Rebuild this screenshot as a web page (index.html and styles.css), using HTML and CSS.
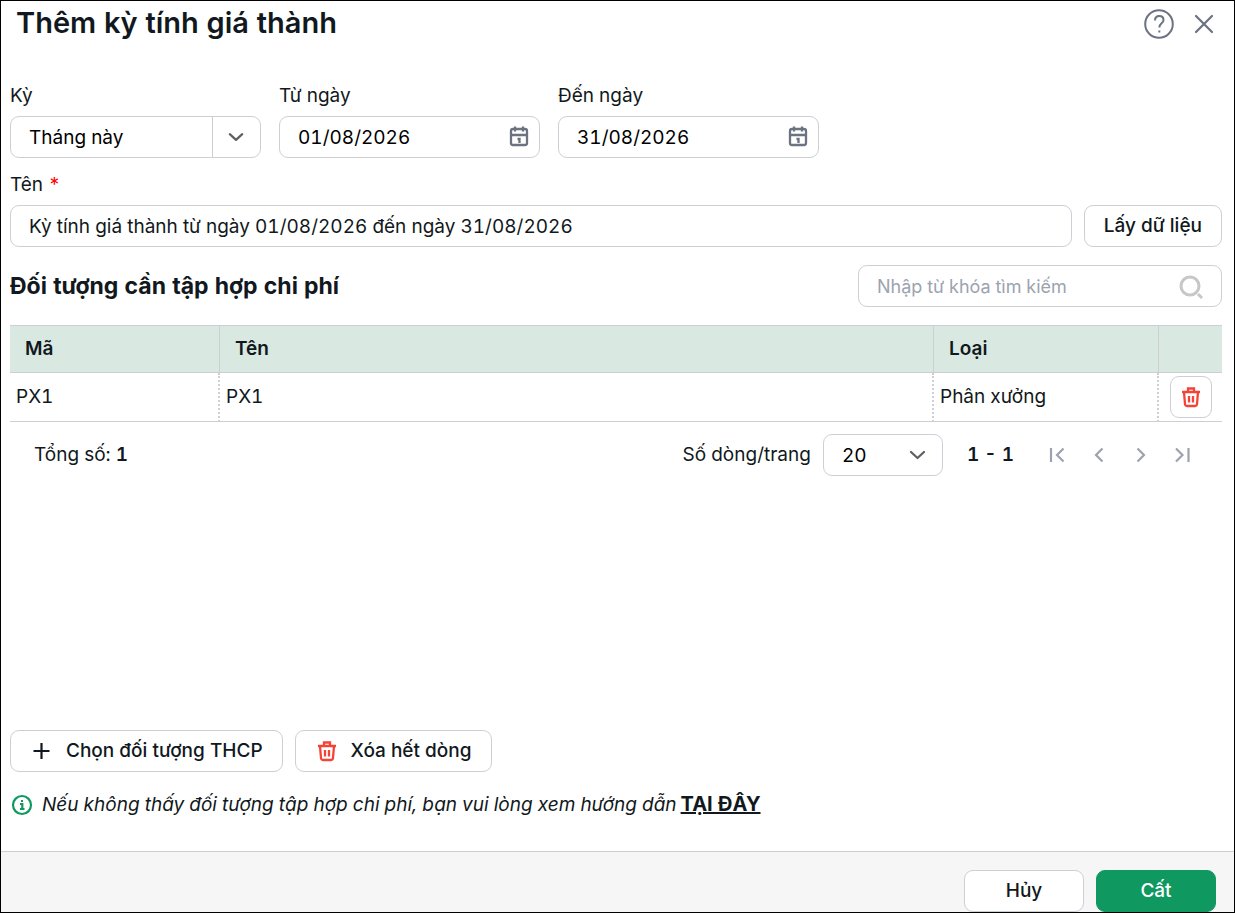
FILE: index.html
```html
<!DOCTYPE html>
<html lang="vi">
<head>
    <meta charset="UTF-8">
    <meta name="viewport" content="width=device-width, initial-scale=1.0">
    <title>Thêm kỳ tính giá thành</title>
    <link rel="stylesheet" href="styles.css">
</head>
<body>
    <!-- Shared icons -->
    <svg class="sprite" aria-hidden="true">
        <symbol id="icon-chevron" viewBox="0 0 24 24">
            <path d="M5 9L11.500 15L18 9" fill="none" stroke="currentColor" stroke-width="2.300" stroke-linecap="round" stroke-linejoin="round"/>
        </symbol>
        <symbol id="icon-calendar" viewBox="0 0 24 24">
            <g fill="none" stroke="currentColor" stroke-width="2.300">
                <rect x="4" y="4" width="16" height="16" rx="2"/>
                <path d="M4 10H20M8 1.500V6.500M16 1.500V6.500M10.500 14H12.500V18"/>
            </g>
        </symbol>
        <symbol id="icon-trash" viewBox="0 0 24 24">
            <g fill="none" stroke="currentColor" stroke-width="2.300">
                <path d="M3 7H21M5 7L6 19Q6.200 21 8 21H16Q17.800 21 18 19L19 7"/>
                <path d="M9 7V3.500H15V7M10 11V17.500M14 11V17.500"/>
            </g>
        </symbol>
    </svg>

    <div class="dialog">
        <header class="dialog-header">
            <h1>Thêm kỳ tính giá thành</h1>
            <div class="header-actions">
                <button class="icon-btn" type="button" aria-label="Trợ giúp">
                    <svg width="30" height="30" viewBox="0 0 30 30" fill="none" stroke="currentColor" stroke-width="2">
                        <circle cx="15" cy="15" r="13.800"/>
                        <path d="M11 11.500C11 8.500 12.800 7 15.300 7C17.800 7 19.500 8.500 19.500 11C19.500 14.500 15.300 14 15.300 18.500"/>
                        <path d="M15.300 21.500V23.500"/>
                    </svg>
                </button>
                <button class="icon-btn" type="button" aria-label="Đóng">
                    <svg width="24" height="24" viewBox="0 0 24 24" fill="none" stroke="currentColor" stroke-width="2.200" stroke-linecap="round">
                        <path d="M4 4L20 20M20 4L4 20"/>
                    </svg>
                </button>
            </div>
        </header>

        <main class="dialog-body">
            <div class="row period-row">
                <div class="field field-period">
                    <label for="period">Kỳ</label>
                    <div class="select-box split">
                        <select id="period">
                            <option>Tháng này</option>
                        </select>
                        <svg class="select-arrow" width="24" height="24"><use href="#icon-chevron"/></svg>
                    </div>
                </div>
                <div class="field">
                    <label for="fromDate">Từ ngày</label>
                    <div class="input-box">
                        <input type="text" id="fromDate" value="01/08/2026">
                        <svg class="calendar" width="24" height="24"><use href="#icon-calendar"/></svg>
                    </div>
                </div>
                <div class="field">
                    <label for="toDate">Đến ngày</label>
                    <div class="input-box">
                        <input type="text" id="toDate" value="31/08/2026">
                        <svg class="calendar" width="24" height="24"><use href="#icon-calendar"/></svg>
                    </div>
                </div>
            </div>

            <div class="row name-row">
                <div class="field field-name">
                    <label for="name">Tên <span class="required">*</span></label>
                    <div class="input-box">
                        <input class="name-input" type="text" id="name" value="Kỳ tính giá thành từ ngày 01/08/2026 đến ngày 31/08/2026">
                    </div>
                </div>
                <button class="btn" type="button">Lấy dữ liệu</button>
            </div>

            <div class="row section-row">
                <h2>Đối tượng cần tập hợp chi phí</h2>
                <div class="input-box search-box">
                    <input type="search" placeholder="Nhập từ khóa tìm kiếm" aria-label="Tìm kiếm">
                    <svg width="26" height="26" viewBox="0 0 26 26" fill="none" stroke="#c7c7c7" stroke-width="3">
                        <circle cx="12" cy="13" r="9"/>
                        <path d="M20 21L24 25"/>
                    </svg>
                </div>
            </div>

            <table>
                <thead>
                    <tr>
                        <th class="col-code">Mã</th>
                        <th>Tên</th>
                        <th class="col-type">Loại</th>
                        <th class="col-action"></th>
                    </tr>
                </thead>
                <tbody>
                    <tr>
                        <td>PX1</td>
                        <td>PX1</td>
                        <td>Phân xưởng</td>
                        <td class="cell-action">
                            <button class="btn btn-square" type="button" aria-label="Xóa">
                                <svg class="trash" width="24" height="24"><use href="#icon-trash"/></svg>
                            </button>
                        </td>
                    </tr>
                </tbody>
            </table>

            <div class="pager">
                <div class="total">Tổng số: <b>1</b></div>
                <label for="pageSize">Số dòng/trang</label>
                <div class="select-box page-size">
                    <select id="pageSize">
                        <option>20</option>
                    </select>
                    <svg class="select-arrow" width="24" height="24"><use href="#icon-chevron"/></svg>
                </div>
                <span class="range">1 - 1</span>
                <div class="pager-nav">
                    <button class="icon-btn" type="button" aria-label="Trang đầu">
                        <svg width="24" height="24" viewBox="0 0 24 24"><path d="M6 5V19M18.500 5.500L12 12L18.500 18.500"/></svg>
                    </button>
                    <button class="icon-btn" type="button" aria-label="Trang trước">
                        <svg width="24" height="24" viewBox="0 0 24 24"><path d="M15.500 5.500L9 12L15.500 18.500"/></svg>
                    </button>
                    <button class="icon-btn" type="button" aria-label="Trang sau">
                        <svg width="24" height="24" viewBox="0 0 24 24"><path d="M8.500 5.500L15 12L8.500 18.500"/></svg>
                    </button>
                    <button class="icon-btn" type="button" aria-label="Trang cuối">
                        <svg width="24" height="24" viewBox="0 0 24 24"><path d="M5 5.500L11.500 12L5 18.500M17.500 5V19"/></svg>
                    </button>
                </div>
            </div>

            <div class="row table-actions">
                <button class="btn" type="button">
                    <svg width="24" height="24" viewBox="0 0 24 24" fill="none" stroke="currentColor" stroke-width="2.200"><path d="M11.500 4V20M3.500 12H19.500"/></svg>
                    Chọn đối tượng THCP
                </button>
                <button class="btn" type="button">
                    <svg class="trash" width="24" height="24"><use href="#icon-trash"/></svg>
                    Xóa hết dòng
                </button>
            </div>

            <div class="note">
                <svg width="24" height="24" viewBox="0 0 24 24" fill="none" stroke="#0f9960" stroke-width="2.200">
                    <circle cx="12" cy="12" r="9"/>
                    <path d="M10 11H12.300V16M10 16H14.500M11 8H13"/>
                </svg>
                <p><i>Nếu không thấy đối tượng tập hợp chi phí, bạn vui lòng xem hướng dẫn</i><a href="#">TẠI ĐÂY</a></p>
            </div>
        </main>

        <footer class="dialog-footer">
            <button class="btn" type="button">Hủy</button>
            <button class="btn btn-primary" type="button">Cất</button>
        </footer>
    </div>
</body>
</html>
```

FILE: styles.css
```css
* {
    box-sizing: border-box;
}

body {
    margin: 0;
    font-family: Inter, "Noto Sans", sans-serif;
    font-size: 19px;
    line-height: 24px;
    font-variant-numeric: tabular-nums;
    color: #111820;
    background: white;
}

h1, h2, p {
    margin: 0;
}

button, input, select {
    font: inherit;
    font-variant-numeric: inherit;
    color: inherit;
}

svg {
    display: block;
    flex: none;
}

.sprite {
    position: absolute;
    width: 0;
    height: 0;
}

.dialog {
    min-height: 100vh;
    border: 1px solid black;
    display: flex;
    flex-direction: column;
}

/* Header */
.dialog-header {
    display: flex;
    align-items: center;
    justify-content: space-between;
    height: 46px;
    padding: 0 18px 0 15px;
}

h1 {
    padding-bottom: 2px;
    font-size: 29px;
    line-height: 36px;
    font-weight: 600;
}

.header-actions {
    display: flex;
    align-items: center;
    gap: 18px;
    color: #6b7280;
}

.icon-btn {
    padding: 0;
    border: none;
    background: none;
    color: inherit;
    cursor: pointer;
}

/* Form */
.dialog-body {
    flex: 1;
    display: flex;
    flex-direction: column;
    padding: 37px 12px 34px 9px;
}

.row {
    display: flex;
    gap: 12px;
}

.period-row {
    gap: 18px;
}

.field {
    flex: 0 1 261px;
    min-width: 0;
    display: flex;
    flex-direction: column;
    gap: 8px;
}

.field-period {
    flex-basis: 251px;
}

.name-row {
    margin-top: 15px;
    align-items: flex-end;
}

.field-name {
    flex: 1;
}

.required {
    color: red;
}

.input-box,
.select-box {
    height: 42px;
    border: 1px solid #cdcfd5;
    border-radius: 9px;
    background: white;
    overflow: hidden;
}

.input-box {
    display: flex;
    align-items: center;
    padding: 0 8px 0 18px;
}

input {
    flex: 1;
    min-width: 0;
    padding: 2px 0 0;
    border: none;
    outline: none;
    background: none;
    color: black;
}

.name-input {
    color: #111820;
}

.calendar {
    color: #6b7280;
}

/* The arrow shares the grid cell with the select */
.select-box {
    display: grid;
    align-items: center;
}

.select-box select,
.select-arrow {
    grid-area: 1 / 1;
}

select {
    appearance: none;
    height: 40px;
    padding: 2px 48px 0 18px;
    border: none;
    outline: none;
    background: none;
    color: black;
}

.select-arrow {
    justify-self: end;
    margin-right: 12px;
    color: #616161;
    pointer-events: none;
}

.split .select-arrow {
    width: 48px;
    height: 40px;
    margin-right: 0;
    padding: 8px 12px;
    border-left: 1px solid #cdcfd5;
}

.btn {
    display: flex;
    align-items: center;
    justify-content: center;
    gap: 12px;
    height: 42px;
    padding: 0 19px;
    border: 1px solid #cdcfd5;
    border-radius: 9px;
    background: white;
    font-weight: 500;
    white-space: nowrap;
    cursor: pointer;
}

.btn-square {
    width: 42px;
    padding: 0;
}

.trash {
    color: #f44336;
}

/* Table section */
.section-row {
    align-items: center;
    justify-content: space-between;
    margin: 18px 0;
}

h2 {
    font-size: 23px;
    line-height: 30px;
    font-weight: 700;
}

.search-box {
    flex: 0 1 364px;
    padding-right: 17px;
}

.search-box input {
    font-size: 18px;
}

input::placeholder {
    color: #9ca3af;
    opacity: 1;
}

table {
    width: 100%;
    table-layout: fixed;
    border-collapse: separate;
    border-spacing: 0;
}

th {
    height: 48px;
    padding: 0 15px;
    text-align: left;
    font-weight: 600;
    background: #d9e8e1;
    border: 1px solid #cdcfd5;
    border-width: 1px 1px 1px 0;
}

td {
    height: 49px;
    padding: 0 6px;
    border-right: 2px dotted #cdcfd5;
    border-bottom: 1px solid #cdcfd5;
}

th:last-child,
td:last-child {
    border-right: none;
}

.col-code {
    width: 210px;
}

.col-type {
    width: 225px;
}

.col-action {
    width: 63px;
}

.cell-action {
    padding: 0 11px;
}

/* Pager */
.pager {
    display: flex;
    align-items: center;
    gap: 12px;
    padding: 12px 27px 0 24px;
}

.total {
    flex: 1;
}

b {
    font-weight: 600;
}

.page-size {
    width: 120px;
}

.range {
    margin: 0 19px 0 12px;
    font-weight: 600;
}

.pager-nav {
    display: flex;
    gap: 18px;
}

.pager-nav path {
    fill: none;
    stroke: #9ca3af;
    stroke-width: 2.2;
}

.table-actions {
    margin-top: auto;
}

.note {
    display: flex;
    align-items: center;
    gap: 8px;
    margin-top: 20px;
}

.note a {
    margin-left: 4px;
    color: inherit;
    font-size: 20px;
    font-weight: 700;
}

/* Footer */
.dialog-footer {
    display: flex;
    justify-content: flex-end;
    gap: 12px;
    padding: 18px 18px 0;
    border-top: 1px solid #cdcfd5;
    background: #f6f6f6;
}

.dialog-footer .btn {
    width: 120px;
}

.btn-primary {
    color: white;
    background: #0f9960;
    border-color: #0f9960;
}
```
